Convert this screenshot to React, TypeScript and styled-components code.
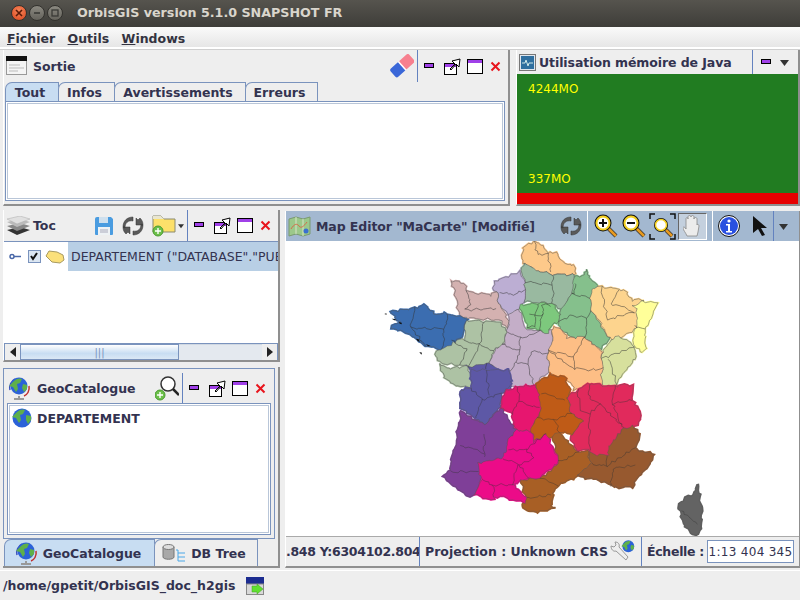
import React from "react";
import styled, { createGlobalStyle } from "styled-components";

const GlobalStyle = createGlobalStyle`
  html, body {
    margin: 0;
    padding: 0;
    background: #eeeeee;
  }
  * {
    box-sizing: border-box;
  }
`;

const Frame = styled.div`
  width: 800px;
  height: 600px;
  overflow: hidden;
  display: flex;
  flex-direction: column;
  background: #eeeeee;
  color: #333350;
  font-family: "DejaVu Sans", sans-serif;
  font-size: 12.5px;
  font-weight: 700;
`;

const TitleBar = styled.div`
  height: 27px;
  flex: none;
  display: flex;
  align-items: center;
  padding: 0 0 2px 11px;
  background: linear-gradient(#56544e, #3e3d39);
  color: #d9d5cc;
  font-size: 12.7px;
`;

const TitleText = styled.span`
  margin-left: 12px;
`;

const WinButton = styled.div<{ $close?: boolean }>`
  width: 16px;
  height: 16px;
  margin-right: 2px;
  border-radius: 50%;
  display: flex;
  align-items: center;
  justify-content: center;
  border: 1px solid #33322e;
  background: ${(props) =>
    props.$close
      ? "radial-gradient(circle at 50% 35%, #f6865a, #d9441c)"
      : "linear-gradient(#8b8981, #64625b)"};
`;

const MenuBar = styled.div`
  height: 20px;
  flex: none;
  display: flex;
  align-items: center;
  gap: 12.5px;
  padding: 2px 0 0 7px;
  background: linear-gradient(#fafafa, #e6e6e6);
  color: #333340;
`;

const MenuKey = styled.span`
  text-decoration: underline;
`;

const MenuRule = styled.div`
  height: 3px;
  flex: none;
  background: #ffffff;
  border-bottom: 1px solid #cfcfcf;
`;

const TopRow = styled.div`
  height: 156px;
  flex: none;
  display: flex;
  gap: 6px;
  padding-left: 3px;
`;

const BottomRow = styled.div`
  height: 358px;
  flex: none;
  margin-top: 4px;
  display: flex;
  gap: 5px;
  padding-left: 3px;
`;

const Panel = styled.div<{ $width?: number; $height?: number; $grow?: boolean }>`
  display: flex;
  flex-direction: column;
  min-width: 0;
  ${(props) => (props.$width ? `width: ${props.$width}px; flex: none;` : "")}
  ${(props) => (props.$height ? `height: ${props.$height}px;` : "")}
  ${(props) => (props.$grow ? "flex: 1;" : "")}
  background: #eeeeee;
  border-right: 2px solid #8f8f8f;
  border-bottom: 2px solid #8f8f8f;
  border-left: 1px solid #ffffff;
`;

const Header = styled.div<{ $active?: boolean; $height?: number; $flush?: boolean }>`
  height: ${(props) => props.$height ?? 31}px;
  flex: none;
  display: flex;
  align-items: center;
  padding-left: ${(props) => (props.$flush ? 0 : 2)}px;
  background: ${(props) => (props.$active ? "#a3b8d0" : "#eeeeee")};
`;

const HeaderTitle = styled.span<{ $gap?: number; $tight?: boolean }>`
  margin-left: ${(props) => props.$gap ?? 7}px;
  white-space: nowrap;
  letter-spacing: ${(props) => (props.$tight ? "-0.08px" : "normal")};
`;

const Tools = styled.div<{ $gap?: number; $right?: number }>`
  margin-left: auto;
  height: 100%;
  display: flex;
  align-items: center;
  gap: ${(props) => props.$gap ?? 3}px;
  padding-right: ${(props) => props.$right ?? 7}px;
`;

const Group = styled.div<{ $gap: number }>`
  display: flex;
  align-items: center;
  gap: ${(props) => props.$gap}px;
`;

const Controls = styled.div`
  display: flex;
  align-items: center;
  gap: 6px;
  margin-left: 3px;

  & > svg:first-child {
    margin-right: 3px;
  }

  & > svg:last-child {
    margin-left: 1px;
  }
`;

const Sep = styled.div<{ $light?: boolean }>`
  width: 1px;
  align-self: stretch;
  background: ${(props) => (props.$light ? "#ffffff" : "#6382bf")};
`;

const TabStrip = styled.div<{ $height?: number }>`
  display: flex;
  flex: none;
  height: ${(props) => props.$height ?? 19}px;
  padding-left: 2px;
`;

const Tab = styled.div<{ $selected?: boolean; $width: number }>`
  width: ${(props) => props.$width}px;
  margin-left: -1px;
  padding-right: 4px;
  display: flex;
  align-items: center;
  justify-content: center;
  gap: 5px;
  border: 1px solid #7a93bd;
  border-bottom: none;
  border-top-left-radius: 7px;
  background: ${(props) => (props.$selected ? "#c8ddf2" : "#eeeeee")};
`;

const Inset = styled.div`
  flex: 1;
  margin: 0 3px 3px 1px;
  background: #ffffff;
  border: 1px solid #7a93bd;
  outline: 1px solid #b9c6d8;
  outline-offset: -3px;
`;

const MemoryBody = styled.div`
  flex: 1;
  display: flex;
  flex-direction: column;
  justify-content: space-between;
  background: linear-gradient(#217c21 0 119px, #e60000 119px);
  color: #ffff00;
  font-size: 12px;
  font-weight: 400;
  padding: 8px 0 8px 11px;
`;

const MemoryLine = styled.div`
  height: 15px;
`;

const MemoryLow = styled(MemoryLine)`
  margin-bottom: 9px;
`;

const LeftColumn = styled.div`
  width: 277px;
  flex: none;
  display: flex;
  flex-direction: column;
  gap: 5px;
`;

const Tree = styled.div`
  flex: 1;
  background: #ffffff;
  border-top: 1px solid #7a93bd;
  overflow: hidden;
`;

const TreeRow = styled.div`
  height: 29px;
  display: flex;
  align-items: center;
  padding-left: 5px;
  gap: 4px;
`;

const Selected = styled.span`
  flex: 1;
  height: 29px;
  margin-left: -1px;
  padding-left: 3px;
  line-height: 29px;
  white-space: nowrap;
  overflow: hidden;
  background: #b8cfe5;
  font-size: 12.5px;
  font-weight: 400;
`;

const Scrollbar = styled.div`
  height: 17px;
  flex: none;
  display: flex;
  background: #eeeeee;
  border: 1px solid #7a93bd;
  border-bottom: none;
`;

const ScrollArrow = styled.div`
  width: 15px;
  display: flex;
  align-items: center;
  justify-content: center;
  background: #eeeeee;
`;

const ScrollThumb = styled.div`
  width: 159px;
  display: flex;
  align-items: center;
  justify-content: center;
  border: 1px solid #7a93bd;
  background: linear-gradient(#ffffff, #c8ddf2 60%, #dbe8f5);
  color: #7a93bd;
  font-size: 10px;
  font-weight: 400;
`;

const ScrollTrack = styled.div`
  flex: 1;
  background: #e4e9ef;
  border-top: 1px solid #d0d8e2;
`;

const GeoOuter = styled(Panel)`
  flex: 1;
  border-left: none;
`;

const GeoFrame = styled.div`
  flex: 1;
  display: flex;
  flex-direction: column;
  margin: 1px 3px 0 0;
  padding: 4px 3px 3px 3px;
  border: 1px solid #7a93bd;
`;

const GeoList = styled.div`
  flex: 1;
  background: #ffffff;
  border: 1px solid #7a93bd;
  outline: 1px solid #b9c6d8;
  outline-offset: -3px;
  padding: 4px 4px;
`;

const GeoRow = styled.div`
  display: flex;
  align-items: center;
  gap: 5px;
  height: 20px;
`;

const MapPanel = styled(Panel)`
  flex: 1;
  margin-top: 1px;
  border-right: 1px solid #8f8f8f;
`;

const MapCanvas = styled.div`
  height: 295px;
  flex: none;
  background: #ffffff;
`;

const MapStatus = styled.div`
  flex: 1;
  display: flex;
  align-items: center;
  border-top: 1px solid #aaaaaa;
  padding-right: 5px;
  overflow: hidden;
  white-space: nowrap;
`;

const Coordinates = styled.span`
  width: 133px;
  flex: none;
  letter-spacing: -0.3px;
  overflow: hidden;
`;

const Projection = styled.span`
  width: 216px;
  flex: none;
  margin-left: 5px;
  display: flex;
  align-items: center;
  gap: 1px;
`;

const ScaleLabel = styled.span`
  margin-left: 5px;
  letter-spacing: -0.3px;
`;

const ScaleInput = styled.div`
  width: 87px;
  height: 23px;
  margin-left: auto;
  background: #ffffff;
  border: 1px solid #7a93bd;
  display: flex;
  align-items: center;
  justify-content: center;
  font-weight: 400;
  font-size: 12px;
  letter-spacing: 0.3px;
`;

const StatusBar = styled.div`
  flex: 1;
  display: flex;
  align-items: center;
  gap: 11px;
  margin-top: 2px;
  padding-left: 3px;
  border-top: 1px solid #ffffff;
`;

type IconProps = { size?: number };

const EraserIcon = () => (
  <svg width="24" height="24" viewBox="0 0 24 24">
    <g transform="rotate(-42 12 12)">
      <rect x="0" y="6.5" width="13" height="11" rx="2" fill="#3a67d8" />
      <rect x="12" y="6.5" width="13" height="11" rx="2" fill="#f7808f" />
      <rect x="11.5" y="6.5" width="1.5" height="11" fill="#ffffff" />
    </g>
  </svg>
);

const MinIcon = () => (
  <svg width="11" height="7" viewBox="0 0 11 7">
    <rect x="0.5" y="0.5" width="9" height="4" fill="#a040e8" stroke="#000" />
  </svg>
);

const FloatIcon = () => (
  <svg width="17" height="17" viewBox="0 0 17 17">
    <rect x="0.5" y="5.5" width="12" height="11" fill="#fff" stroke="#000" />
    <rect x="1" y="6" width="11" height="3" fill="#a040e8" />
    <path d="M6 11 11 6 8 3 16 1l-1 8-3-3-5 6z" fill="#fff" stroke="#000" />
  </svg>
);

const MaxIcon = () => (
  <svg width="16" height="15" viewBox="0 0 16 15">
    <rect x="0.5" y="0.5" width="15" height="14" fill="#fff" stroke="#000" />
    <rect x="1" y="1" width="14" height="3" fill="#a040e8" />
  </svg>
);

const CloseIcon = () => (
  <svg width="11" height="11" viewBox="0 0 11 11">
    <path d="M1.5 1.5l8 8M9.5 1.5l-8 8" stroke="#e8141c" strokeWidth="2" />
  </svg>
);

const DropIcon = ({ size = 9 }: IconProps) => (
  <svg width={size} height={size} viewBox="0 0 9 9">
    <path d="M0 2h9L4.5 8z" fill="#333" />
  </svg>
);

const WindowControls = () => (
  <Controls>
    <MinIcon />
    <FloatIcon />
    <MaxIcon />
    <CloseIcon />
  </Controls>
);

const TerminalIcon = () => (
  <svg width="21" height="20" viewBox="0 0 21 20">
    <rect x="0.5" y="0.5" width="20" height="18" fill="#f4f4f4" stroke="#999" />
    <rect x="0" y="0" width="21" height="5" fill="#111" />
    <path d="M3 9h11M3 12h15M3 15h9" stroke="#bbb" />
  </svg>
);

const ChipIcon = () => (
  <svg width="17" height="17" viewBox="0 0 17 17">
    <rect x="0.5" y="0.5" width="16" height="16" fill="#dfe6ee" stroke="#777" />
    <rect x="2" y="2" width="13" height="13" fill="#2f6f9f" />
    <path d="M3 9h3l1-3 2 6 1-3h4" stroke="#cfe8e8" fill="none" />
  </svg>
);

const LayersIcon = () => (
  <svg width="25" height="20" viewBox="0 0 25 20">
    <path d="M1 14 14 11l10 3-13 5z" fill="#333" />
    <path d="M1 10 14 7l10 3-13 5z" fill="#888" />
    <path d="M1 6 14 3l10 3-13 5z" fill="#bbb" />
    <path d="M1 3 14 0l10 3-13 5z" fill="#e0e0e0" stroke="#aaa" strokeWidth="0.5" />
  </svg>
);

const SaveIcon = () => (
  <svg width="20" height="20" viewBox="0 0 20 20">
    <path d="M1 3a2 2 0 0 1 2-2h14l2 2v15a1 1 0 0 1-1 1H2a1 1 0 0 1-1-1z" fill="#4a9ce0" />
    <rect x="5" y="1" width="9" height="6" fill="#cfe0ee" />
    <rect x="4" y="11" width="12" height="8" fill="#eef2f5" />
    <path d="M6 14h8M6 16h8" stroke="#aab" />
  </svg>
);

const RefreshIcon = () => (
  <svg width="22" height="20" viewBox="0 0 22 20">
    <path d="M11 1C5 1 1 5 1 11c0 3 1 5 3 7l2-2 2 2V11l-7 0 2 1c0-5 3-8 8-7z" fill="#5a5a5a" stroke="#333" strokeWidth="0.5" />
    <path d="M11 19c6 0 10-4 10-10 0-3-1-5-3-7l-2 2-2-2v7h7l-2-1c0 5-3 8-8 7z" fill="#5a5a5a" stroke="#333" strokeWidth="0.5" />
  </svg>
);

const PlusBadge = ({ cx, cy }: { cx: number; cy: number }) => (
  <>
    <circle cx={cx} cy={cy} r="5" fill="#6cc04a" stroke="#4a9a30" />
    <path d={`M${cx - 3} ${cy}h6M${cx} ${cy - 3}v6`} stroke="#fff" strokeWidth="1.4" />
  </>
);

const FolderIcon = () => (
  <svg width="24" height="23" viewBox="0 0 24 23">
    <path d="M1 2h8l3 3h11v13H1z" fill="#fde06a" stroke="#8a8a70" />
    <path d="M1 2h8l3 3H1z" fill="#e9e6cf" />
    <PlusBadge cx={6} cy={17} />
  </svg>
);

const KeyIcon = () => (
  <svg width="15" height="7" viewBox="0 0 15 7">
    <circle cx="3" cy="3.5" r="2" fill="none" stroke="#4a68a8" strokeWidth="1.5" />
    <path d="M5 3.5h7" stroke="#4a68a8" strokeWidth="1.5" />
  </svg>
);

const CheckIcon = () => (
  <svg width="13" height="13" viewBox="0 0 13 13">
    <rect x="0.5" y="0.5" width="12" height="12" fill="#dbe6f2" stroke="#7a93bd" />
    <path d="M3 6l2 3 4-6" fill="none" stroke="#111" strokeWidth="2" />
  </svg>
);

const BlobIcon = () => (
  <svg width="20" height="14" viewBox="0 0 20 14">
    <path d="M1 6 4 1l8 1 6 3 1 5-4 3-8-1z" fill="#fbe07a" stroke="#a89a60" />
  </svg>
);

const GlobeIcon = ({ size = 20 }: IconProps) => (
  <svg width={size} height={size} viewBox="0 0 20 20">
    <circle cx="10" cy="10" r="9.5" fill="#2c62d8" />
    <path d="M4 5c3-4 8-4 9-3l-2 4-3 1 1 5-2 3-3-5-4-1zM14 7l5 1 0 4-3 4-2-4z" fill="#5fb04a" />
  </svg>
);

const GlobeGroup = () => (
  <>
    <circle cx="9" cy="9" r="8.5" fill="#2c62d8" />
    <path d="M3 5c3-4 8-4 9-3l-2 4-3 1 1 5-2 3-3-5-4-1zM13 7l4 1 0 4-3 3-2-4z" fill="#5fb04a" />
  </>
);

const GlobeStandIcon = () => (
  <svg width="24" height="24" viewBox="0 0 24 24">
    <path d="M3 14a10 10 0 0 1 5-11" fill="none" stroke="#3a50c0" strokeWidth="1.5" />
    <path d="M22 10c1 5-2 9-5 10" fill="none" stroke="#c03030" strokeWidth="1.5" />
    <g transform="translate(3 1)">
      <GlobeGroup />
    </g>
    <path d="M12 20v2M7 23h10" stroke="#999" strokeWidth="2" />
  </svg>
);

const SearchPlusIcon = () => (
  <svg width="24" height="26" viewBox="0 0 24 26">
    <circle cx="13" cy="9" r="7" fill="#fff" stroke="#333" strokeWidth="1.5" />
    <path d="M18 14l6 6" stroke="#222" strokeWidth="2.5" />
    <PlusBadge cx={5} cy={20} />
  </svg>
);

const MapIcon = () => (
  <svg width="23" height="23" viewBox="0 0 23 23">
    <path d="M1 4l7-2 7 2 7-2v17l-7 2-7-2-7 2z" fill="#9cc88a" stroke="#7a9a70" />
    <path d="M8 2v17M15 4v17" stroke="#d8e4c8" />
    <path d="M3 14c3-5 6-6 8-3s5 0 8-4" fill="none" stroke="#d86a4a" />
    <circle cx="18" cy="16" r="2.5" fill="#3a70d0" />
  </svg>
);

const ZoomIcon = ({ mode }: { mode: "in" | "out" }) => (
  <svg width="26" height="26" viewBox="0 0 26 26">
    <path d="M15 15l8 8" stroke="#333" strokeWidth="4" />
    <path d="M15 15l8 8" stroke="#e89a20" strokeWidth="2.5" />
    <circle cx="10" cy="10" r="8.5" fill="#111" />
    <circle cx="10" cy="10" r="6.5" fill="#fff" stroke="#f4d020" strokeWidth="2" />
    <path d="M6 10h8" stroke="#111" strokeWidth="2" />
    {mode === "in" && <path d="M10 6v8" stroke="#111" strokeWidth="2" />}
  </svg>
);

const FitIcon = () => (
  <svg width="27" height="27" viewBox="0 0 27 27">
    <path d="M1 6V1h5M21 1h5v5M26 21v5h-5M6 26H1v-5" fill="none" stroke="#111" strokeWidth="1.5" />
    <path d="M17 17l6 6" stroke="#333" strokeWidth="4" />
    <path d="M17 17l6 6" stroke="#e89a20" strokeWidth="2.5" />
    <circle cx="12" cy="12" r="7" fill="#111" />
    <circle cx="12" cy="12" r="5.5" fill="#fff" stroke="#f4d020" strokeWidth="1.5" />
  </svg>
);

const HandButton = styled.div`
  width: 29px;
  height: 27px;
  display: flex;
  align-items: center;
  justify-content: center;
  background: #c4d0de;
  border-top: 1px solid #666;
  border-left: 1px solid #666;
  border-right: 1px solid #fff;
  border-bottom: 1px solid #fff;
`;

const HandIcon = () => (
  <svg width="20" height="22" viewBox="0 0 20 22">
    <path
      d="M4 21c-1-3-4-6-4-8s2-1 3 1V4c0-2 2-2 2 0V2c0-2 3-2 3 0v0c0-2 3-2 3 0v2c0-2 3-2 3 0v6c0-1 2-1 2 1l-1 6-1 4z"
      fill="#ececec"
      stroke="#888"
      strokeWidth="0.8"
    />
  </svg>
);

const InfoIcon = () => (
  <svg width="22" height="22" viewBox="0 0 22 22">
    <circle cx="11" cy="11" r="10.5" fill="#fff" stroke="#111" />
    <circle cx="11" cy="11" r="9" fill="#2a50e0" />
    <circle cx="11" cy="6" r="1.6" fill="#fff" />
    <path d="M8 9h4v7h2v1.5H8V16h2v-5.5H8z" fill="#fff" />
  </svg>
);

const ArrowIcon = () => (
  <svg width="16" height="22" viewBox="0 0 16 22">
    <path d="M1 1l14 12H9l4 7-3 1-4-7-5 4z" fill="#111" />
  </svg>
);

const DbIcon = () => (
  <svg width="24" height="18" viewBox="0 0 24 18">
    <path d="M1 3v10c0 3 11 3 11 0V3z" fill="#a8a8a8" stroke="#777" />
    <ellipse cx="6.5" cy="3" rx="5.5" ry="2.5" fill="#dddddd" stroke="#777" />
    <path d="M14 6h2v11h7M16 9h7M16 13h7" stroke="#4aa8e8" fill="none" />
  </svg>
);

const WrenchGlobeIcon = () => (
  <svg width="26" height="24" viewBox="0 0 26 24">
    <path d="M2 6l3 1 2-2-1-3c3 0 5 2 4 5l9 10-2 3-10-9c-3 1-5-2-5-5z" fill="#eee" stroke="#999" />
    <g transform="translate(13 0) scale(0.7)">
      <GlobeGroup />
    </g>
  </svg>
);

const RunIcon = () => (
  <svg width="18" height="18" viewBox="0 0 18 18">
    <rect x="0" y="0" width="18" height="7" fill="#1c2c90" />
    <rect x="0.5" y="7" width="17" height="10.5" fill="#d8d8d8" stroke="#888" />
    <path d="M6 9h5V7l6 5-6 5v-2H6z" fill="#60e030" stroke="#40a020" strokeWidth="0.5" />
  </svg>
);

const ArrowLeft = () => (
  <svg width="6" height="10" viewBox="0 0 6 10">
    <path d="M6 0v10L0 5z" fill="#222" />
  </svg>
);

const ArrowRight = () => (
  <svg width="6" height="10" viewBox="0 0 6 10">
    <path d="M0 0v10l6-5z" fill="#222" />
  </svg>
);

const wobble = (x: number, y: number) => {
  const dx = 2.6 * Math.sin(x * 0.23 + y * 0.13) + 1.8 * Math.sin(y * 0.51 - x * 0.11);
  const dy = 2.6 * Math.sin(y * 0.19 - x * 0.17) + 1.8 * Math.sin(x * 0.47 + y * 0.09);
  return `${(x + dx).toFixed(1)},${(y + dy).toFixed(1)}`;
};

// the same wobble for the same spot, so neighbouring regions keep a shared edge
const roughen = (points: string, closed: boolean) => {
  const pts = points.split(" ").map((pair) => pair.split(",").map(Number));
  if (closed) pts.push(pts[0]);
  const out: string[] = [];
  for (let i = 0; i < pts.length - 1; i++) {
    const [x0, y0] = pts[i];
    const [x1, y1] = pts[i + 1];
    const steps = Math.max(1, Math.ceil(Math.hypot(x1 - x0, y1 - y0) / 9));
    for (let s = 0; s < steps; s++) {
      out.push(wobble(x0 + ((x1 - x0) * s) / steps, y0 + ((y1 - y0) * s) / steps));
    }
  }
  if (!closed) out.push(wobble(pts[pts.length - 1][0], pts[pts.length - 1][1]));
  return out.join(" ");
};

const northRegions: [string, string][] = [
  ["#fdc98a", "455,20 490,5 515,20 530,40 555,35 575,65 610,78 612,105 545,102 510,95 455,72"],
  ["#99b9a0", "448,85 460,70 510,95 545,103 612,105 612,130 600,160 570,210 545,190 462,185 462,125"],
  ["#85c08c", "612,110 640,105 650,88 653,115 682,140 660,175 660,210 715,295 690,325 650,300 615,295 565,270 565,215 600,160"],
  ["#fdd48e", "665,145 690,140 760,150 785,180 820,180 800,205 800,245 795,265 740,300 715,295 690,250 658,210 660,175"],
  ["#ffff99", "815,182 858,190 840,240 825,270 820,300 828,325 815,337 785,310 795,260 800,210 785,200"],
  ["#d7e09d", "735,290 775,300 795,330 790,355 750,410 730,445 695,448 690,420 695,330"],
  ["#bcaed3", "445,95 462,125 462,185 445,205 415,225 385,195 378,155 362,145 370,125"],
  ["#d4b1b0", "240,122 280,130 288,155 360,165 378,155 385,195 412,240 408,265 385,240 300,235 265,225 255,170"],
  ["#c4aec8", "415,222 445,205 462,265 505,275 545,270 545,300 530,340 535,400 510,410 490,440 410,440 410,405 355,375 370,330 400,310 410,270"],
  ["#7dc87d", "445,195 500,190 545,190 565,220 565,245 540,255 530,280 500,270 470,262 455,220"],
  ["#fdbe85", "545,258 570,270 590,295 640,290 690,330 695,370 690,450 610,450 600,430 535,400 530,330 545,300"],
  ["#adc2a4", "285,240 340,245 385,245 410,275 395,315 365,330 355,375 295,380 270,375 210,370 190,340 240,300 280,300"],
  ["#adc2a4", "205,375 240,385 290,378 305,440 270,440 225,420"],
  ["#3b6db0", "58,215 130,205 160,195 190,222 230,220 288,238 275,290 215,328 165,318 130,290 60,262 85,245"],
  ["#5d58a6", "295,380 345,370 395,390 420,430 420,450 270,450 305,440"],
];

const northLines = [
  "490,5 500,45 530,40 540,95",
  "462,125 545,135 545,103",
  "545,135 545,190",
  "612,130 610,160 600,160 660,175",
  "565,245 600,225 650,235 660,210",
  "650,235 640,295",
  "690,140 710,240 790,215",
  "740,150 720,190 790,215",
  "385,155 420,165 462,150",
  "285,205 300,210 375,205",
  "288,155 300,195 285,205",
  "500,190 490,260 470,262",
  "475,225 515,225 505,275",
  "540,195 515,195 515,225",
  "530,330 610,350 640,290",
  "610,350 610,385 535,335",
  "610,385 660,390 695,385",
  "410,275 450,295 445,330 410,320 395,315",
  "450,295 505,275",
  "445,330 435,365 410,405",
  "435,365 470,375 490,440",
  "470,375 485,335 530,340",
  "340,245 325,315 365,330",
  "280,300 325,315 295,380",
  "240,300 285,325 270,375",
  "130,205 120,265 165,318",
  "120,265 220,265 215,328",
  "230,220 220,265",
  "345,370 345,445",
  "790,255 825,270",
  "695,355 790,320",
  "715,360 740,440",
];

const southRegions: [string, string][] = [
  ["#5d58a6", "120,0 235,0 243,45 210,70 210,110 160,165 130,145 85,110 92,60 120,55"],
  ["#7f3f98", "90,120 130,150 160,165 210,115 255,180 230,215 225,250 215,265 140,280 150,320 130,375 110,378 60,345 35,320 55,300 75,220"],
  ["#e7166f", "220,65 260,50 315,45 332,90 328,130 320,145 300,185 260,180 245,155 245,130 210,115"],
  ["#a85f25", "362,190 385,185 420,225 440,245 470,245 480,280 440,320 380,345 365,370 362,410 370,415 330,425 290,425 270,405 285,390 270,330 330,325 385,280"],
  ["#97592f", "600,165 628,195 610,235 672,255 650,295 610,330 605,350 550,352 520,335 440,318 478,280 475,245 530,255 525,230 575,180"],
  ["#e12a5c", "410,80 440,60 475,40 550,50 570,45 605,45 605,90 632,135 620,165 580,175 530,230 535,255 500,255 470,240 440,240 418,205 458,150 420,130"],
  ["#bf5b17", "315,42 355,15 400,20 420,65 410,85 420,130 458,150 425,195 385,185 345,210 310,210 300,180 320,145 330,130 325,80"],
  ["#ec0b88", "255,180 300,185 310,215 345,190 385,275 340,310 330,325 285,325 245,345 285,385 285,400 210,380 190,380 190,392 130,375 150,330 140,280 210,265 225,240 230,215"],
  ["#636363", "795,345 803,350 805,375 815,425 805,490 785,497 760,465 742,410 770,378 790,375"],
];

const southLines = [
  "120,55 155,90 210,70",
  "155,90 135,145",
  "165,0 175,75",
  "260,50 265,95 325,115",
  "265,95 245,130",
  "335,70 400,90",
  "320,145 370,150 385,185",
  "370,150 420,130",
  "160,195 160,265",
  "90,225 160,250",
  "60,305 140,305",
  "230,240 285,240 345,190",
  "285,240 310,265 265,285 215,265",
  "265,285 290,325",
  "185,345 245,345 260,285",
  "190,380 185,345 150,330",
  "330,325 380,345",
  "285,385 360,375",
  "440,60 450,120 475,130 475,240",
  "475,130 510,100 535,130 580,175",
  "475,40 475,90 510,100",
  "550,50 545,100 570,165",
  "545,100 605,90",
  "385,275 420,260 440,245",
  "530,255 525,290 610,235",
  "525,290 480,280",
  "545,295 540,350",
  "545,295 610,285",
  "750,420 800,460",
];

const coastSpecks = [
  "M40 222l6-2 1 4z",
  "M62 236l10 1 4 4-6 0z",
  "M84 246l8 2 0 5-6-2z",
  "M135 296l8 2 3 8-6-3z",
  "M165 312l14 6-8 1z",
  "M145 336l8 2-2 6z",
];

const MapRegions = ({
  regions,
  lines,
  outline,
}: {
  regions: [string, string][];
  lines: string[];
  outline: number;
}) => {
  const shapes = regions.map(([fill, points]) => ({ fill, points: roughen(points, true) }));
  return (
    <>
      {shapes.map(({ fill, points }) => (
        <polygon key={points} points={points} fill={fill} stroke={fill} strokeWidth="6" />
      ))}
      {shapes.map(({ fill, points }) => (
        <polygon key={points} points={points} fill={fill} stroke="#555" strokeWidth={outline} />
      ))}
      {lines.map((points) => (
        <polyline key={points} points={roughen(points, false)} fill="none" stroke="#333" strokeWidth={outline} />
      ))}
    </>
  );
};

const FranceMap = () => (
  <svg width="515" height="295" viewBox="285 241 515 295">
    <g transform="translate(370 240) scale(0.3333)">
      <MapRegions regions={northRegions} lines={northLines} outline={1.5} />
      {coastSpecks.map((d) => (
        <path key={d} d={d} fill="#111" />
      ))}
    </g>
    <g transform="translate(430 370) scale(0.3333)">
      <MapRegions regions={southRegions} lines={southLines} outline={1.2} />
    </g>
  </svg>
);

const SmallX = () => (
  <svg width="8" height="8" viewBox="0 0 8 8">
    <path d="M1 1l6 6M7 1L1 7" stroke="#5a1a08" strokeWidth="1.6" />
  </svg>
);

const SmallMin = () => (
  <svg width="8" height="8" viewBox="0 0 8 8">
    <path d="M1 4h6" stroke="#3a3a36" strokeWidth="1.6" />
  </svg>
);

const SmallMax = () => (
  <svg width="8" height="8" viewBox="0 0 8 8">
    <rect x="1" y="1" width="6" height="6" fill="none" stroke="#3a3a36" strokeWidth="1.3" />
  </svg>
);

export default function App() {
  return (
    <Frame>
      <GlobalStyle />
      <TitleBar>
        <WinButton $close>
          <SmallX />
        </WinButton>
        <WinButton>
          <SmallMin />
        </WinButton>
        <WinButton>
          <SmallMax />
        </WinButton>
        <TitleText>OrbisGIS version 5.1.0 SNAPSHOT FR</TitleText>
      </TitleBar>
      <MenuBar>
        <span>
          <MenuKey>F</MenuKey>ichier
        </span>
        <span>
          <MenuKey>O</MenuKey>utils
        </span>
        <span>
          <MenuKey>W</MenuKey>indows
        </span>
      </MenuBar>
      <MenuRule />
      <TopRow>
        <Panel $width={507}>
          <Header $height={32}>
            <TerminalIcon />
            <HeaderTitle $gap={6}>Sortie</HeaderTitle>
            <Tools>
              <EraserIcon />
              <Sep />
              <WindowControls />
            </Tools>
          </Header>
          <TabStrip>
            <Tab $selected $width={54}>Tout</Tab>
            <Tab $width={57}>Infos</Tab>
            <Tab $width={132}>Avertissements</Tab>
            <Tab $width={73}>Erreurs</Tab>
          </TabStrip>
          <Inset />
        </Panel>
        <Panel $grow>
          <Header $height={24}>
            <ChipIcon />
            <HeaderTitle $gap={3} $tight>Utilisation mémoire de Java</HeaderTitle>
            <Tools $gap={8} $right={9}>
              <Sep />
              <MinIcon />
              <DropIcon />
            </Tools>
          </Header>
          <MemoryBody>
            <MemoryLine>4244MO</MemoryLine>
            <MemoryLow>337MO</MemoryLow>
          </MemoryBody>
        </Panel>
      </TopRow>
      <BottomRow>
        <LeftColumn>
          <Panel $width={277} $height={152}>
            <Header>
              <LayersIcon />
              <HeaderTitle $gap={2}>Toc</HeaderTitle>
              <Tools>
                <Group $gap={8}>
                  <SaveIcon />
                  <RefreshIcon />
                  <Group $gap={2}>
                    <FolderIcon />
                    <DropIcon size={6} />
                  </Group>
                </Group>
                <Sep />
                <WindowControls />
              </Tools>
            </Header>
            <Tree>
              <TreeRow>
                <KeyIcon />
                <CheckIcon />
                <BlobIcon />
                <Selected>DEPARTEMENT ("DATABASE"."PUBLIC"."DEPARTEMENT")</Selected>
              </TreeRow>
            </Tree>
            <Scrollbar>
              <ScrollArrow>
                <ArrowLeft />
              </ScrollArrow>
              <ScrollThumb>|||</ScrollThumb>
              <ScrollTrack />
              <ScrollArrow>
                <ArrowRight />
              </ScrollArrow>
            </Scrollbar>
          </Panel>
          <GeoOuter $width={277}>
            <GeoFrame>
              <Header $height={30} $flush>
                <GlobeStandIcon />
                <HeaderTitle $gap={6}>GeoCatalogue</HeaderTitle>
                <Tools $right={5}>
                  <SearchPlusIcon />
                  <Sep />
                  <WindowControls />
                </Tools>
              </Header>
              <GeoList>
                <GeoRow>
                  <GlobeIcon />
                  <span>DEPARTEMENT</span>
                </GeoRow>
              </GeoList>
            </GeoFrame>
            <TabStrip $height={27}>
              <Tab $selected $width={151}>
                <GlobeStandIcon />
                GeoCatalogue
              </Tab>
              <Tab $width={104}>
                <DbIcon />
                DB Tree
              </Tab>
            </TabStrip>
          </GeoOuter>
        </LeftColumn>
        <MapPanel>
          <Header $active $height={30}>
            <MapIcon />
            <HeaderTitle $gap={5} $tight>Map Editor "MaCarte" [Modifié]</HeaderTitle>
            <Tools $gap={5} $right={11}>
              <RefreshIcon />
              <Sep $light />
              <Group $gap={2}>
                <ZoomIcon mode="in" />
                <ZoomIcon mode="out" />
                <FitIcon />
                <HandButton>
                  <HandIcon />
                </HandButton>
              </Group>
              <Sep $light />
              <Group $gap={12}>
                <InfoIcon />
                <ArrowIcon />
              </Group>
              <Sep />
              <DropIcon />
            </Tools>
          </Header>
          <MapCanvas>
            <FranceMap />
          </MapCanvas>
          <MapStatus>
            <Coordinates>.848 Y:6304102.804</Coordinates>
            <Sep />
            <Projection>
              Projection : Unknown CRS
              <WrenchGlobeIcon />
            </Projection>
            <Sep />
            <ScaleLabel>Échelle :</ScaleLabel>
            <ScaleInput>1:13 404 345</ScaleInput>
          </MapStatus>
        </MapPanel>
      </BottomRow>
      <StatusBar>
        <span>/home/gpetit/OrbisGIS_doc_h2gis</span>
        <RunIcon />
      </StatusBar>
    </Frame>
  );
}
